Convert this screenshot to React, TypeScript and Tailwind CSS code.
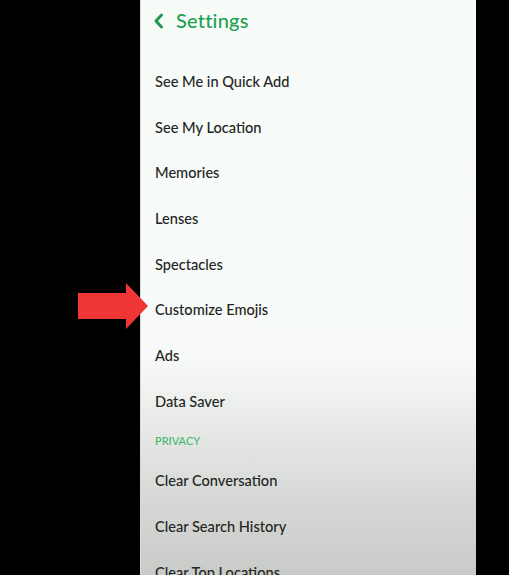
import React from 'react';

const generalItems = [
  'See Me in Quick Add',
  'See My Location',
  'Memories',
  'Lenses',
  'Spectacles',
  'Customize Emojis',
  'Ads',
  'Data Saver',
];

const privacyItems = ['Clear Conversation', 'Clear Search History', 'Clear Top Locations'];

const Row = ({ label }: { label: string }) => (
  <div className="h-[45.7px] shrink-0 flex items-center pl-[14px] text-[14.6px] font-medium text-[#222522]">
    {label}
  </div>
);

export default function App() {
  return (
    <div className="w-[509px] h-[575px] bg-black flex overflow-hidden font-['Lato','Noto_Sans',sans-serif]">
      {/* left black area with the red pointer */}
      <div className="relative w-[140px] shrink-0">
        <svg className="absolute left-[78px] top-[283px]" width="70" height="46" viewBox="0 0 70 46">
          <polygon points="0,10 48,10 48,0 70,23 48,46 48,36 0,36" fill="#f03535" />
        </svg>
      </div>

      {/* phone screen */}
      <div className="w-[336px] shrink-0 h-full flex flex-col border-l border-[#d8dbd8] bg-[linear-gradient(to_bottom,#f8fcf9_0%,#f7faf8_62%,#e8eae7_74%,#d6d8d5_87%,#c9cbc8_100%)]">
        <div className="h-[59px] shrink-0 flex items-start pt-[7px] pl-[12px] gap-[11px] text-[#22a052]">
          <svg width="12" height="26" viewBox="0 0 12 26" className="mt-[1px]">
            <path d="M8.5 7 L3 13 L8.5 19" fill="none" stroke="#1e9a4c" strokeWidth="3" strokeLinecap="round" strokeLinejoin="round" />
          </svg>
          <span className="text-[20px] font-medium leading-[26px] tracking-[0.2px]">Settings</span>
        </div>

        {generalItems.map((item) => (
          <Row key={item} label={item} />
        ))}

        <div className="h-[34px] shrink-0 flex items-center pl-[14px] text-[11px] font-medium text-[#4ab874]">
          PRIVACY
        </div>

        {privacyItems.map((item) => (
          <Row key={item} label={item} />
        ))}
      </div>
    </div>
  );
}
